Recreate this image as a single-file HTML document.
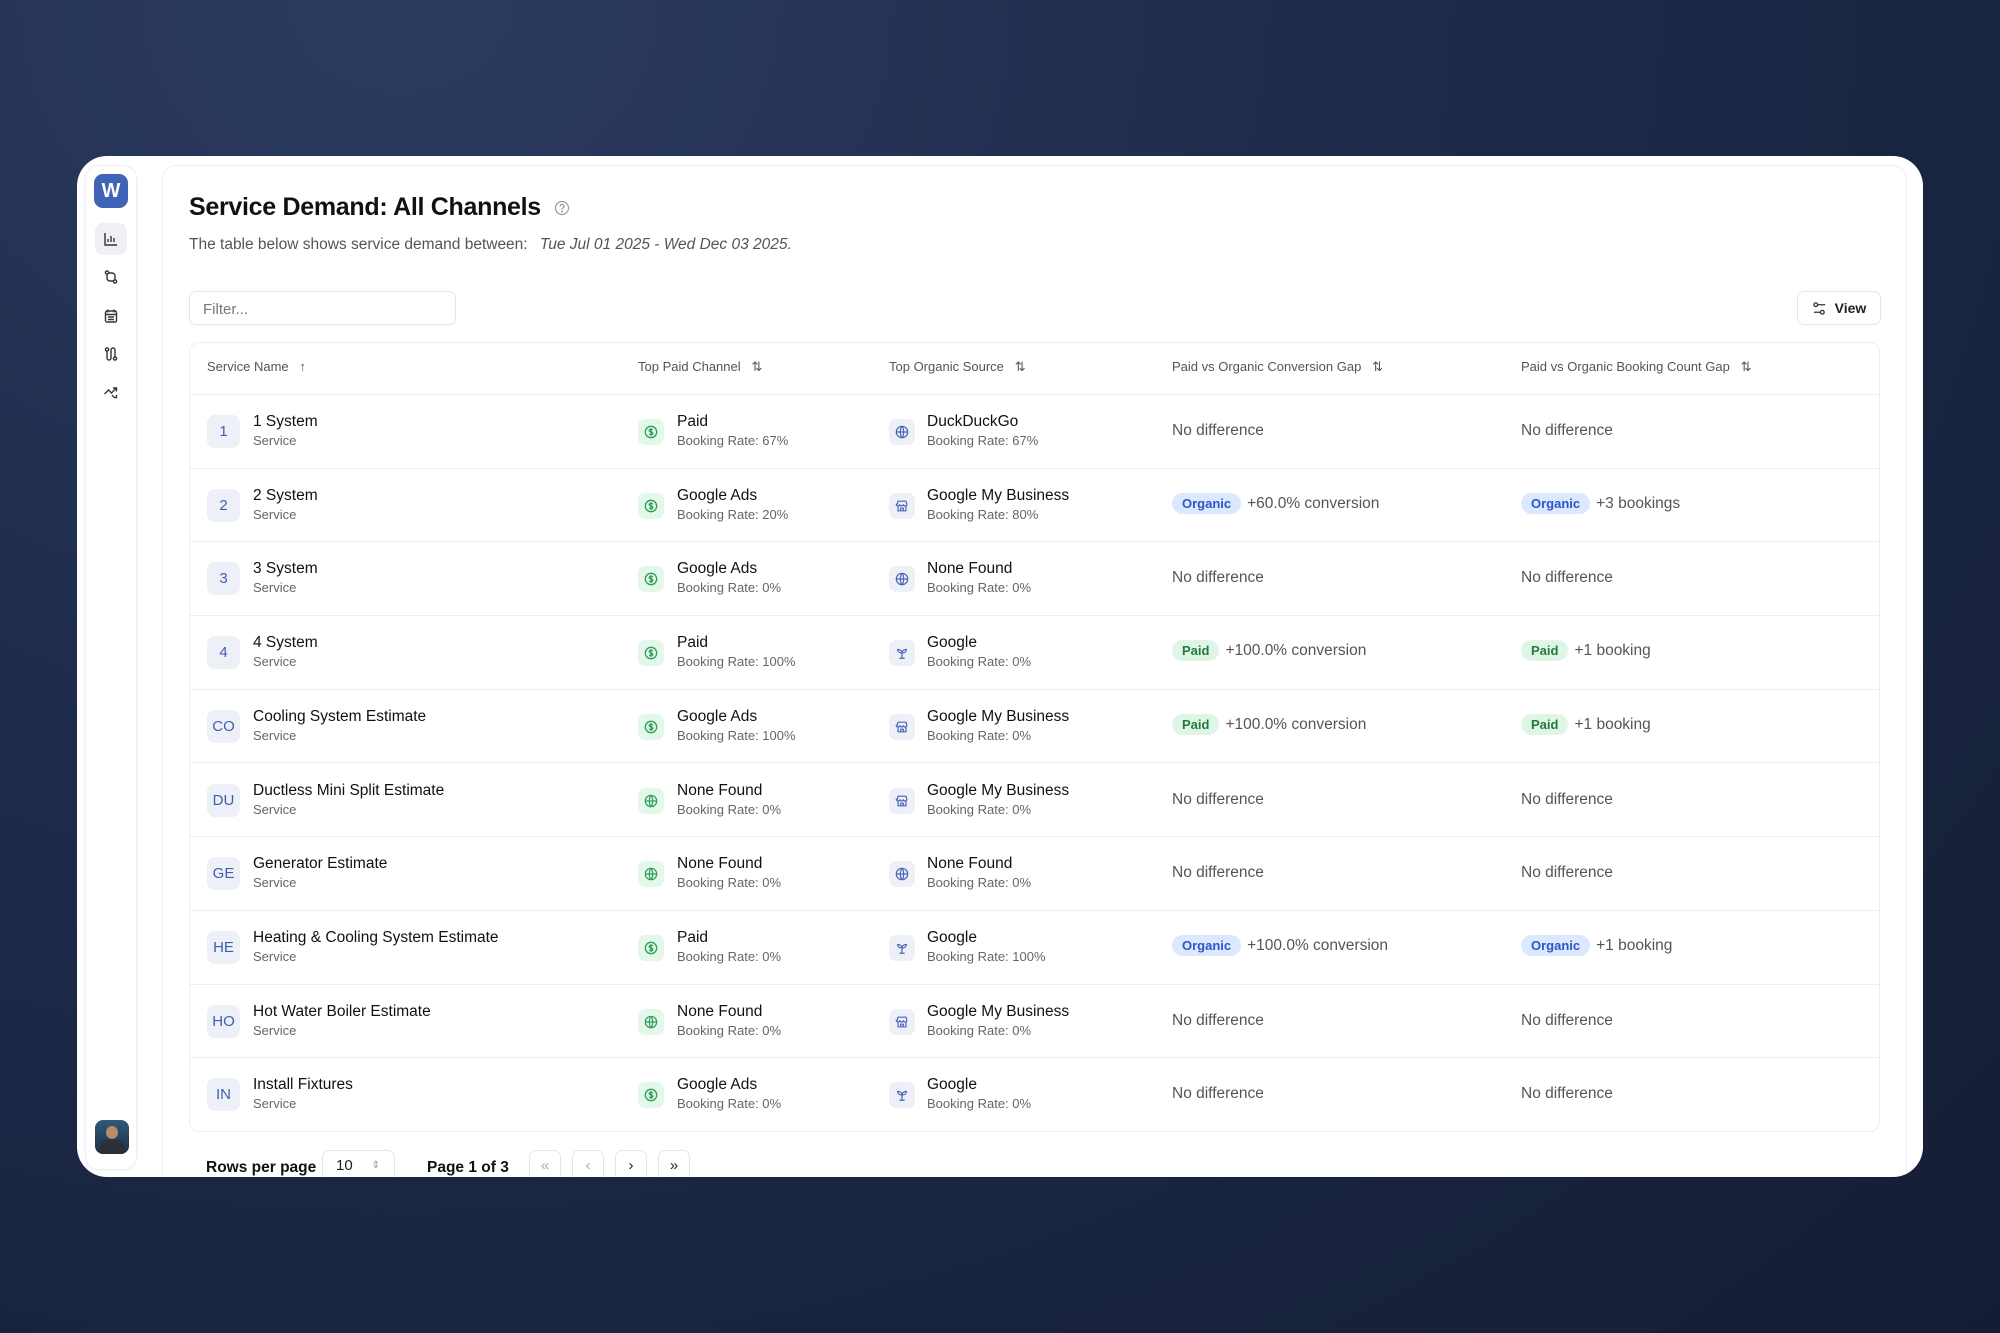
<!DOCTYPE html>
<html><head><meta charset="utf-8"><style>
*{box-sizing:border-box;margin:0;padding:0}
body{width:2000px;height:1333px;overflow:hidden;font-family:"Liberation Sans",sans-serif;background:radial-gradient(ellipse at 20% 0%,#2b3b60 0%,#1d2a4a 45%,#141d33 100%);position:relative}
.card{position:absolute;left:77px;top:156px;width:1846px;height:1021px;background:#fff;border-radius:30px;overflow:hidden}
.side{position:absolute;left:8px;top:9px;width:52px;height:1005px;border:1px solid #eceef6;border-radius:14px;background:#fff;box-shadow:0 1px 3px rgba(0,0,0,.05)}
.logo{position:absolute;left:8px;top:8px;width:34px;height:34px;border-radius:9px;background:#3f63b5;color:#fff;font-weight:bold;font-size:20px;text-align:center;line-height:34px}
.si{position:absolute;left:9px;width:32px;height:32px;border-radius:8px;display:flex;align-items:center;justify-content:center}
.avatar{position:absolute;left:9px;top:954px;width:34px;height:34px;border-radius:8px;background:linear-gradient(#2f5a7a,#1c2e44);overflow:hidden}
.main{position:absolute;left:85px;top:9px;width:1745px;height:1030px;border:1px solid #eceef6;border-radius:14px;overflow:hidden}
h1{position:absolute;left:26px;top:27px;font-size:25px;font-weight:bold;color:#111;letter-spacing:-.3px}
.sub{position:absolute;left:26px;top:70px;font-size:15.5px;color:#555}
.sub i{color:#555;margin-left:8px}
.filter{position:absolute;left:26px;top:125px;width:267px;height:34px;border:1px solid #e3e5ee;border-radius:7px;font-size:15px;color:#777;padding:9px 13px;box-shadow:0 1px 2px rgba(0,0,0,.04)}
.view{position:absolute;left:1634px;top:125px;width:84px;height:34px;border:1px solid #e3e5ee;border-radius:7px;font-size:14px;color:#222;display:flex;align-items:center;justify-content:center;gap:8px;font-weight:bold}
.tbl{position:absolute;left:26px;top:176px;width:1691px;height:790px;border:1px solid #eceef6;border-radius:10px}
.hd{position:absolute;top:0;height:52px;width:100%;border-bottom:1px solid #eceef6}
.hd span{position:absolute;top:16px;font-size:13px;color:#555}
.row{position:absolute;left:0;width:100%;height:73.7px;border-bottom:1px solid #eceef6}
.row:last-child{border-bottom:none}
.nb{position:absolute;left:17px;top:20px;width:33px;height:33px;border-radius:8px;background:#edf0f7;color:#3f5fae;font-size:15px;text-align:center;line-height:33px}
.t1{position:absolute;font-size:15.5px;color:#111;top:18px;white-space:nowrap}
.t2{position:absolute;font-size:13px;color:#666;top:38px;white-space:nowrap}
.ic{position:absolute;top:24px;width:26px;height:26px;border-radius:7px;display:flex;align-items:center;justify-content:center}
.g{background:#e3f8ea}.b{background:#edf0f7}
.gap{position:absolute;top:27px;font-size:15.5px;color:#555;white-space:nowrap}
.bd{display:inline-block;font-size:13px;font-weight:bold;padding:3px 10px;border-radius:11px;margin-right:6px}
.bo{background:#dce8fd;color:#2b56c9}.bp{background:#dff6e6;color:#237a3f}
.pg{position:absolute;top:993px;font-size:15.5px;color:#111;font-weight:600}
.pb{position:absolute;top:984px;width:32px;height:32px;border:1px solid #e3e5ee;border-radius:7px;text-align:center;line-height:30px;font-size:15px;color:#222}
</style></head><body>
<div class="card">
 <div class="side">
  <div class="logo">W</div>
  <div class="si" style="top:57px;background:#eef0f6"><svg width="16" height="16" viewBox="0 0 16 16" fill="none" stroke="#333" stroke-width="1.4"><path d="M2 2v12h12M5 11V8M8 11V5M11 11V7"/></svg></div>
  <div class="si" style="top:95px"><svg width="16" height="16" viewBox="0 0 16 16" fill="none" stroke="#333" stroke-width="1.4"><circle cx="4" cy="3.5" r="1.6"/><circle cx="12" cy="12.5" r="1.6"/><path d="M4 5v4a3 3 0 0 0 3 3h3M12 11V7a3 3 0 0 0-3-3H6"/></svg></div>
  <div class="si" style="top:134px"><svg width="16" height="16" viewBox="0 0 16 16" fill="none" stroke="#333" stroke-width="1.4"><rect x="2.5" y="3" width="11" height="11" rx="1.5"/><path d="M5 1.5v3M11 1.5v3M2.5 6.5h11M5 9h6M5 11.5h6"/></svg></div>
  <div class="si" style="top:172px"><svg width="16" height="16" viewBox="0 0 16 16" fill="none" stroke="#333" stroke-width="1.4"><circle cx="4" cy="3.5" r="1.6"/><circle cx="12" cy="12.5" r="1.6"/><path d="M4 5v7a2 2 0 0 0 4 0V4a2 2 0 0 1 4 0v7"/></svg></div>
  <div class="si" style="top:210px"><svg width="16" height="16" viewBox="0 0 16 16" fill="none" stroke="#333" stroke-width="1.4"><path d="M1.5 10l4-4 3 3 5-5M10 4h3.5v3.5M9 11l2 2.5M11 13.5h2.5V11"/></svg></div>
  <div class="avatar"><div style="position:absolute;left:11px;top:6px;width:12px;height:13px;border-radius:50%;background:#b98a70"></div><div style="position:absolute;left:5px;top:19px;width:24px;height:16px;border-radius:10px 10px 0 0;background:#2a2f38"></div></div>
 </div>
 <div class="main">
  <h1>Service Demand: All Channels <svg style="vertical-align:middle;margin-left:6px" width="16" height="16" viewBox="0 0 16 16" fill="none" stroke="#999" stroke-width="1.2"><circle cx="8" cy="8" r="6.5"/><path d="M6.2 6.3a1.9 1.9 0 1 1 2.4 1.8c-.5.2-.6.5-.6 1v.4"/><circle cx="8" cy="11.5" r=".4" fill="#999"/></svg></h1>
  <div class="sub">The table below shows service demand between: <i>Tue Jul 01 2025 - Wed Dec 03 2025.</i></div>
  <div class="filter">Filter...</div>
  <div class="view"><svg width="15" height="15" viewBox="0 0 16 16" fill="none" stroke="#333" stroke-width="1.4"><circle cx="4" cy="4" r="2"/><circle cx="11" cy="12" r="2"/><path d="M6 4h8M2 12h7"/></svg>View</div>
  <div class="tbl">
   <div class="hd">
    <span style="left:17px">Service Name &nbsp;&nbsp;↑</span>
    <span style="left:448px">Top Paid Channel &nbsp;&nbsp;⇅</span>
    <span style="left:699px">Top Organic Source &nbsp;&nbsp;⇅</span>
    <span style="left:982px">Paid vs Organic Conversion Gap &nbsp;&nbsp;⇅</span>
    <span style="left:1331px">Paid vs Organic Booking Count Gap &nbsp;&nbsp;⇅</span>
   </div>
   <div id="rows"></div>
  </div>
  <div class="pg" style="left:43px">Rows per page</div>
  <div class="pb" style="left:159px;width:73px;text-align:left;padding-left:13px;font-weight:normal">10 <span style="position:absolute;right:14px;color:#999;font-size:10px">⇕</span></div>
  <div class="pg" style="left:264px">Page 1 of 3</div>
  <div class="pb" style="left:366px;color:#aaa">«</div>
  <div class="pb" style="left:409px;color:#aaa">‹</div>
  <div class="pb" style="left:452px">›</div>
  <div class="pb" style="left:495px">»</div>
 </div>
</div>
<script>
const $='<svg width="14" height="14" viewBox="0 0 16 16" fill="none" stroke="#2f9e57" stroke-width="1.5"><circle cx="8" cy="8" r="6.5"/><path d="M10 5.8c-.4-.6-1.1-.9-2-.9-1.1 0-2 .6-2 1.5 0 2 4 1 4 3.1 0 .9-.9 1.5-2 1.5-.9 0-1.7-.4-2-1M8 3.5v9"/></svg>';
const glob=c=>`<svg width="14" height="14" viewBox="0 0 16 16" fill="none" stroke="${c}" stroke-width="1.4"><circle cx="8" cy="8" r="6.5"/><path d="M1.5 8h13M8 1.5c-2.5 3-2.5 10 0 13M8 1.5c2.5 3 2.5 10 0 13"/></svg>`;
const store='<svg width="14" height="14" viewBox="0 0 16 16" fill="none" stroke="#4a66b8" stroke-width="1.4"><path d="M2.5 6l1-3.5h9l1 3.5c0 1.2-1 2-2 2s-2-.8-2-2c0 1.2-1 2-2 2s-2-.8-2-2c0 1.2-1 2-2 2s-2-.8-2-2zM3.5 8v5.5h9V8M6.5 13.5v-3h3v3"/></svg>';
const sprout='<svg width="14" height="14" viewBox="0 0 16 16" fill="none" stroke="#4a66b8" stroke-width="1.4"><path d="M5 14h6M8 14V8M8 8c0-2.5-2-4-5-4 0 2.5 2 4 5 4zM8 8c0-2.5 2-4 5-4 0 2.5-2 4-5 4"/></svg>';
const G=glob('#2f9e57'),B=glob('#4a66b8');
const rows=[
['1','1 System',$,'Paid','67%',B,'DuckDuckGo','67%',null,null],
['2','2 System',$,'Google Ads','20%',store,'Google My Business','80%',['o','+60.0% conversion'],['o','+3 bookings']],
['3','3 System',$,'Google Ads','0%',B,'None Found','0%',null,null],
['4','4 System',$,'Paid','100%',sprout,'Google','0%',['p','+100.0% conversion'],['p','+1 booking']],
['CO','Cooling System Estimate',$,'Google Ads','100%',store,'Google My Business','0%',['p','+100.0% conversion'],['p','+1 booking']],
['DU','Ductless Mini Split Estimate',G,'None Found','0%',store,'Google My Business','0%',null,null],
['GE','Generator Estimate',G,'None Found','0%',B,'None Found','0%',null,null],
['HE','Heating &amp; Cooling System Estimate',$,'Paid','0%',sprout,'Google','100%',['o','+100.0% conversion'],['o','+1 booking']],
['HO','Hot Water Boiler Estimate',G,'None Found','0%',store,'Google My Business','0%',null,null],
['IN','Install Fixtures',$,'Google Ads','0%',sprout,'Google','0%',null,null]];
const gap=g=>g?`<span class="bd ${g[0]=='o'?'bo':'bp'}">${g[0]=='o'?'Organic':'Paid'}</span>${g[1]}`:'No difference';
let h='';
rows.forEach((r,i)=>{h+=`<div class="row" style="top:${52+i*73.7}px">
<div class="nb">${r[0]}</div><div class="t1" style="left:63px">${r[1]}</div><div class="t2" style="left:63px">Service</div>
<div class="ic ${r[2]==$||r[2]==G?'g':'b'}" style="left:448px">${r[2]}</div><div class="t1" style="left:487px">${r[3]}</div><div class="t2" style="left:487px">Booking Rate: ${r[4]}</div>
<div class="ic b" style="left:699px">${r[5]}</div><div class="t1" style="left:737px">${r[6]}</div><div class="t2" style="left:737px">Booking Rate: ${r[7]}</div>
<div class="gap" style="left:982px;${r[8]?'top:24px':''}">${gap(r[8])}</div>
<div class="gap" style="left:1331px;${r[9]?'top:24px':''}">${gap(r[9])}</div></div>`});
document.getElementById('rows').innerHTML=h;
</script>
</body></html>
